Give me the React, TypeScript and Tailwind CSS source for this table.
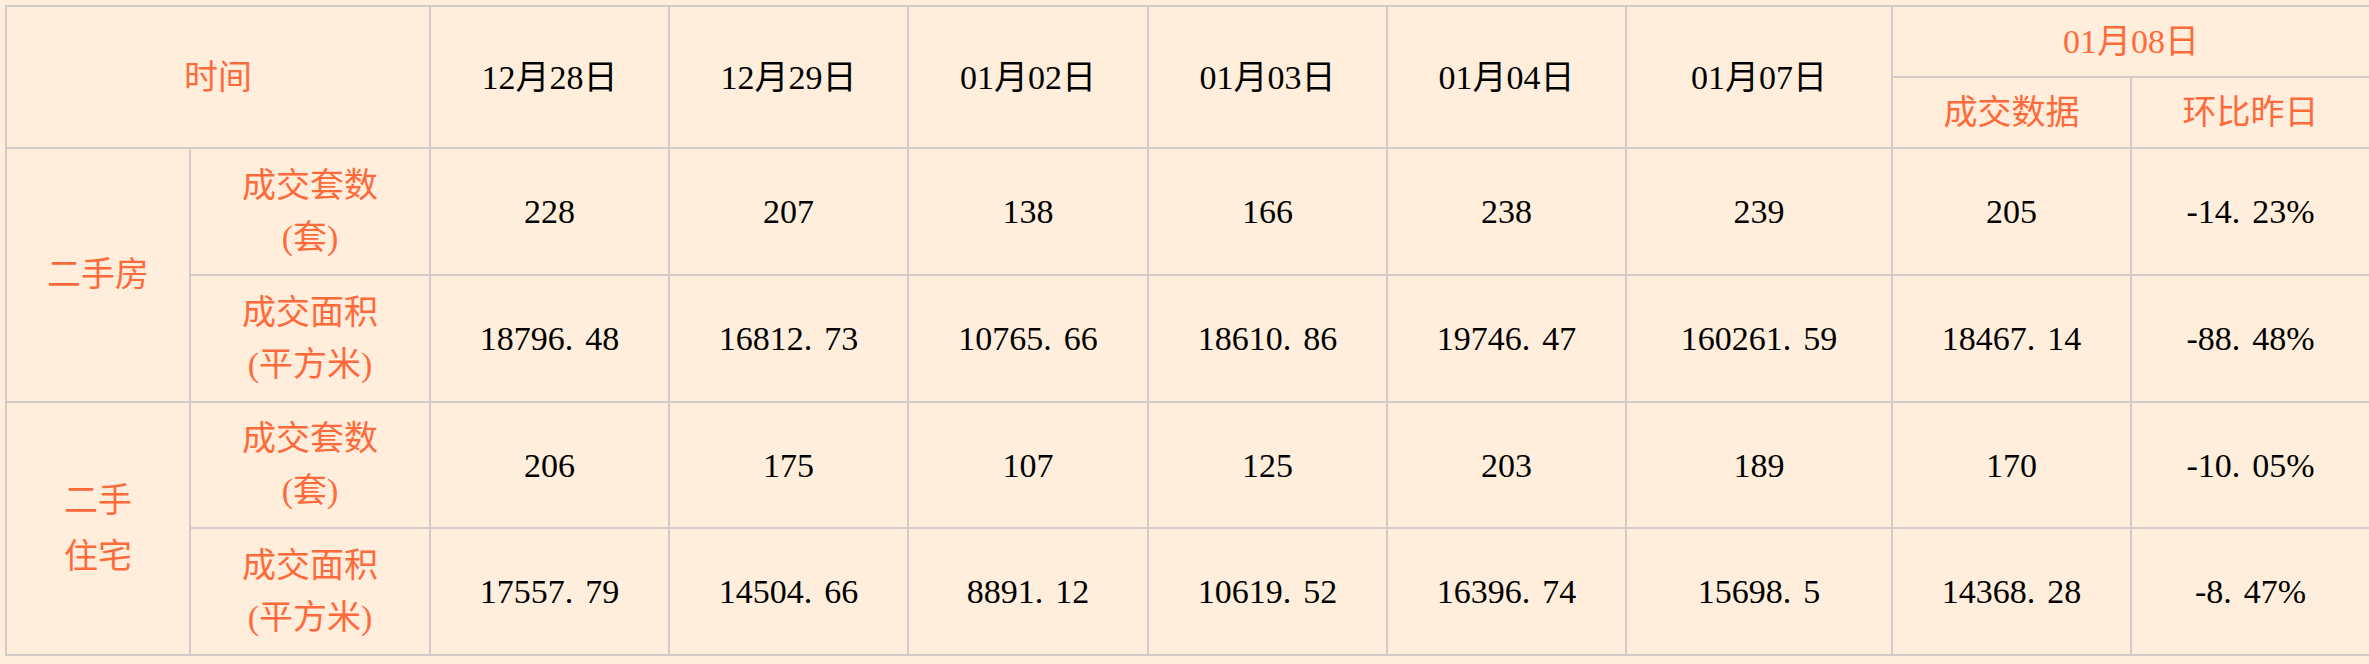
import React from "react";

const FONT = "font-['Liberation_Serif','Noto_Sans_CJK_SC',serif]";

function Num({ v }: { v: string }) {
  const i = v.indexOf(".");
  if (i < 0) return <span>{v}</span>;
  return (
    <span>
      {v.slice(0, i + 1)}
      <span className="ml-[12px]">{v.slice(i + 1)}</span>
    </span>
  );
}

const rows: { label: string[]; values: string[] }[][] = [
  [
    {
      label: ["成交套数", "(套)"],
      values: ["228", "207", "138", "166", "238", "239", "205", "-14.23%"],
    },
    {
      label: ["成交面积", "(平方米)"],
      values: ["18796.48", "16812.73", "10765.66", "18610.86", "19746.47", "160261.59", "18467.14", "-88.48%"],
    },
  ],
  [
    {
      label: ["成交套数", "(套)"],
      values: ["206", "175", "107", "125", "203", "189", "170", "-10.05%"],
    },
    {
      label: ["成交面积", "(平方米)"],
      values: ["17557.79", "14504.66", "8891.12", "10619.52", "16396.74", "15698.5", "14368.28", "-8.47%"],
    },
  ],
];

const groups = [["二手房"], ["二手", "住宅"]];
const dates = ["12月28日", "12月29日", "01月02日", "01月03日", "01月04日", "01月07日"];

const cell = "bg-[#ffeedb] flex items-center justify-center text-center";

export default function App() {
  return (
    <div className={`w-[2369px] h-[664px] overflow-hidden bg-[#ffeedb] ${FONT} text-[34px] text-black`}>
      <div className="ml-[5px] mt-[5px] inline-grid grid-cols-[182px_238px_237px_237px_238px_237px_237px_264px_237px_237px] grid-rows-[69px_69px_125px_125px_124px_125px] gap-[2px] p-[2px] bg-[#d3cbc7]">
        <div className={`${cell} col-span-2 row-span-2 text-[#ff6a3c]`}>时间</div>
        {dates.map((d) => (
          <div key={d} className={`${cell} row-span-2`}>
            {d}
          </div>
        ))}
        <div className={`${cell} col-span-2 text-[#ff6a3c]`}>01月08日</div>
        <div className={`${cell} text-[#ff6a3c]`}>成交数据</div>
        <div className={`${cell} text-[#ff6a3c]`}>环比昨日</div>
        {rows.map((grp, gi) => (
          <React.Fragment key={gi}>
            <div className={`${cell} row-span-2 flex-col text-[#ff6a3c] leading-[56px]`}>
              {groups[gi].map((t) => (
                <div key={t}>{t}</div>
              ))}
            </div>
            {grp.map((r, ri) => (
              <React.Fragment key={ri}>
                <div className={`${cell} flex-col text-[#ff6a3c] leading-[52px]`}>
                  {r.label.map((t) => (
                    <div key={t}>{t}</div>
                  ))}
                </div>
                {r.values.map((v, vi) => (
                  <div key={vi} className={cell}>
                    <Num v={v} />
                  </div>
                ))}
              </React.Fragment>
            ))}
          </React.Fragment>
        ))}
      </div>
    </div>
  );
}
